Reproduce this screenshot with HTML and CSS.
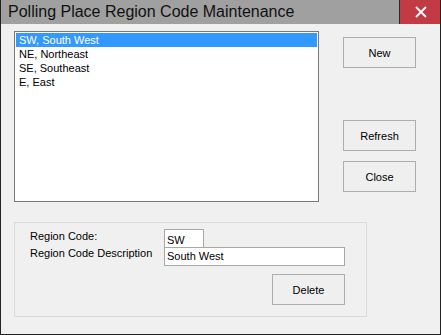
FILE: index.html
```html
<!DOCTYPE html>
<html>
<head>
<meta charset="utf-8">
<link rel="stylesheet" href="styles.css">
</head>
<body>
<div class="window">
  <div class="titlebar">
    <div class="title">Polling Place Region Code Maintenance</div>
    <div class="close-btn">
      <svg width="12" height="12" viewBox="0 0 12 12"><path d="M1 1 L11 11 M11 1 L1 11" stroke="#fff" stroke-width="1.8" fill="none"/></svg>
    </div>
  </div>
  <div class="content">
    <div class="top-row">
      <div class="listbox">
        <div class="item selected">SW, South West</div>
        <div class="item">NE, Northeast</div>
        <div class="item">SE, Southeast</div>
        <div class="item">E, East</div>
      </div>
      <div class="btn-col">
        <div class="btn">New</div>
        <div class="btn btn-refresh">Refresh</div>
        <div class="btn btn-close">Close</div>
      </div>
    </div>
    <div class="group">
      <div class="group-inner">
        <div class="field-row">
          <div class="label">Region Code:</div>
          <div class="input input-code">SW</div>
        </div>
        <div class="field-row row2">
          <div class="label label2">Region Code Description</div>
          <div class="input input-desc">South West</div>
        </div>
        <div class="delete-row">
          <div class="btn">Delete</div>
        </div>
      </div>
    </div>
  </div>
</div>
</body>
</html>
```
FILE: styles.css
```css
html, body {
  margin: 0;
  padding: 0;
  background: #f0f0f0;
}
.window {
  width: 439px;
  height: 334px;
  border: 1px solid #222;
  border-top: none;
  background: #f0f0f0;
  display: flex;
  flex-direction: column;
  font-family: "Liberation Sans", Arial, sans-serif;
  font-size: 11px;
  color: #000;
}
.titlebar {
  height: 24px;
  background: #a0a0a0;
  display: flex;
  align-items: stretch;
}
.title {
  flex: 1;
  font-size: 16px;
  line-height: 24px;
  padding-left: 7px;
  color: #111;
}
.close-btn {
  width: 38px;
  background: #c23b44;
  border-left: 1px solid #2a2a2a;
  display: flex;
  align-items: center;
  justify-content: center;
  padding-left: 2px;
  padding-bottom: 1px;
}
.content {
  padding: 7px 0 0 13px;
}
.top-row {
  display: flex;
}
.listbox {
  width: 302px;
  height: 168px;
  border: 1px solid #7a7a7a;
  background: #fff;
  padding: 1px 0 0 1px;
}
.item {
  height: 14px;
  line-height: 14px;
  padding-left: 3px;
  margin-right: 1px;
}
.item.selected {
  background: #3399ff;
  color: #fff;
}
.btn-col {
  margin-left: 24px;
  padding-top: 6px;
  display: flex;
  flex-direction: column;
}
.btn {
  width: 71px;
  height: 29px;
  border: 1px solid #adadad;
  background: #efefef;
  display: flex;
  align-items: center;
  justify-content: center;
  font-size: 11px;
}
.btn-refresh {
  margin-top: 52px;
}
.btn-close {
  margin-top: 10px;
}
.group {
  margin-top: 20px;
  width: 351px;
  height: 93px;
  border: 1px solid #dadada;
}
.group-inner {
  width: 315px;
  margin-left: 15px;
  padding-top: 6px;
}
.field-row {
  display: flex;
}
.label {
  width: 134px;
  line-height: 14px;
  height: 14px;
}
.input {
  border: 1px solid #a8a8a8;
  background: #fff;
  padding-left: 2px;
  line-height: 18px;
  box-sizing: border-box;
}
.input-code {
  width: 40px;
  height: 20px;
  line-height: 20px;
}
.row2 {
  margin-top: -2px;
}
.label2 {
  margin-top: -1px;
}
.input-desc {
  width: 181px;
  height: 19px;
  line-height: 17px;
}
.delete-row {
  display: flex;
  justify-content: flex-end;
  margin-top: 8px;
}
```
